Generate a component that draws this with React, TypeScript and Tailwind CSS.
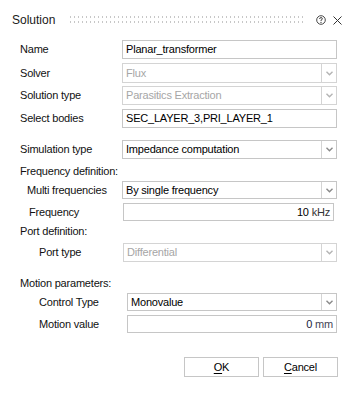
import React from "react";

const font = { fontFamily: '"Liberation Sans", Arial, sans-serif' };

function Chevron({ dark }: { dark?: boolean }) {
  return (
    <svg width="7" height="5" viewBox="0 0 7 5">
      <path d="M0.5 0.8 L3.5 3.8 L6.5 0.8" fill="none" stroke={dark ? "#8a8a8a" : "#b4b4b4"} strokeWidth="1.4" />
    </svg>
  );
}

function Field({
  value,
  disabled,
  select,
  className = "",
}: {
  value: React.ReactNode;
  disabled?: boolean;
  select?: boolean;
  className?: string;
}) {
  return (
    <div
      className={
        "flex items-stretch border bg-white " +
        (disabled ? "border-[#d4d4d4] text-[#a6a6a6] " : "border-[#c6c6c6] text-black ") +
        className
      }
    >
      <div className="flex-1 flex items-center pl-[3px] truncate">{value}</div>
      {select && (
        <div className="w-[15px] flex items-center justify-center border-l border-[#d4d4d4]">
          <Chevron dark={!disabled} />
        </div>
      )}
    </div>
  );
}

function Row({
  label,
  labelClass,
  children,
  className = "",
}: {
  label: string;
  labelClass: string;
  children: React.ReactNode;
  className?: string;
}) {
  return (
    <div className={"flex items-stretch " + className}>
      <div className={"flex items-center shrink-0 " + labelClass}>{label}</div>
      {children}
    </div>
  );
}

export default function App() {
  return (
    <div className="w-[354px] h-[396px] bg-white text-[11px] tracking-[-0.2px] text-[#111] overflow-hidden" style={font}>
      {/* title bar */}
      <div className="h-[40px] flex items-center pl-3 pr-[12px]">
        <span className="text-[12px] tracking-normal text-[#1a1a1a]">Solution</span>
        <svg className="ml-[15px]" width="236" height="8" viewBox="0 0 236 8">
          <defs>
            <pattern id="grip" width="4" height="5" patternUnits="userSpaceOnUse">
              <rect x="0" y="0.5" width="1" height="1" fill="#8f8f8f" />
            </pattern>
          </defs>
          <rect x="0" y="0" width="236" height="8" fill="url(#grip)" />
        </svg>
        <div className="flex-1" />
        <svg width="10" height="10" viewBox="0 0 10 10" className="mr-[7px]">
          <circle cx="5" cy="5" r="4.3" fill="none" stroke="#333" strokeWidth="0.9" />
          <path d="M3.6 4 Q3.6 2.6 5 2.6 Q6.4 2.6 6.4 3.8 Q6.4 4.6 5 5.2 L5 6" fill="none" stroke="#333" strokeWidth="0.9" />
          <circle cx="5" cy="7.4" r="0.6" fill="#333" />
        </svg>
        <svg width="9" height="9" viewBox="0 0 9 9">
          <path d="M0.5 0.5 L8.5 8.5 M8.5 0.5 L0.5 8.5" stroke="#333" strokeWidth="1" />
        </svg>
      </div>

      <div className="pl-5 pr-[17px]">
        <Row label="Name" labelClass="w-[102px]" className="h-[19px]">
          <Field value="Planar_transformer" className="flex-1" />
        </Row>
        <Row label="Solver" labelClass="w-[102px]" className="h-[20px] mt-[4px]">
          <Field value="Flux" disabled select className="flex-1" />
        </Row>
        <Row label="Solution type" labelClass="w-[102px]" className="h-[19px] mt-[3px]">
          <Field value="Parasitics Extraction" disabled select className="flex-1" />
        </Row>
        <Row label="Select bodies" labelClass="w-[102px]" className="h-[19px] mt-[4px]">
          <Field value="SEC_LAYER_3,PRI_LAYER_1" className="flex-1" />
        </Row>

        <Row label="Simulation type" labelClass="w-[102px]" className="h-[19px] mt-[12px]">
          <Field value="Impedance computation" select className="flex-1" />
        </Row>
        <div className="h-[18px] mt-[3px] flex items-center">Frequency definition:</div>
        <Row label="Multi frequencies" labelClass="w-[102px] pl-[7px]" className="h-[18px] mt-[1px]">
          <Field value="By single frequency" select className="flex-1" />
        </Row>
        <Row label="Frequency" labelClass="w-[103px] pl-[9px]" className="h-[18px] mt-[4px] pr-[3px]">
          <Field
            value={
              <span className="ml-auto pr-[3px]">
                <span className="text-black">10</span> <span className="text-[#333]">kHz</span>
              </span>
            }
            className="flex-1"
          />
        </Row>
        <div className="h-[18px] mt-[1px] flex items-center">Port definition:</div>
        <Row label="Port type" labelClass="w-[103px] pl-[19px]" className="h-[19px] mt-[3px]">
          <Field value="Differential" disabled select className="flex-1" />
        </Row>

        <div className="h-[18px] mt-[12px] flex items-center">Motion parameters:</div>
        <Row label="Control Type" labelClass="w-[107px] pl-[19px]" className="h-[18px] mt-[1px]">
          <Field value="Monovalue" select className="flex-1" />
        </Row>
        <Row label="Motion value" labelClass="w-[107px] pl-[19px]" className="h-[18px] mt-[4px]">
          <Field
            value={
              <span className="ml-auto pr-[3px]">
                <span className="text-[#1a1a3a]">0</span> <span className="text-[#445]">mm</span>
              </span>
            }
            className="flex-1"
          />
        </Row>

        <div className="flex justify-end gap-[4px] mt-[24px] -mr-px">
          <button className="w-[75px] h-[20px] border border-[#c6c6c6] bg-white text-[11px] text-black">
            <span className="underline underline-offset-2">O</span>K
          </button>
          <button className="w-[75px] h-[20px] border border-[#c6c6c6] bg-white text-[11px] text-black">
            <span className="underline underline-offset-2">C</span>ancel
          </button>
        </div>
      </div>
    </div>
  );
}
